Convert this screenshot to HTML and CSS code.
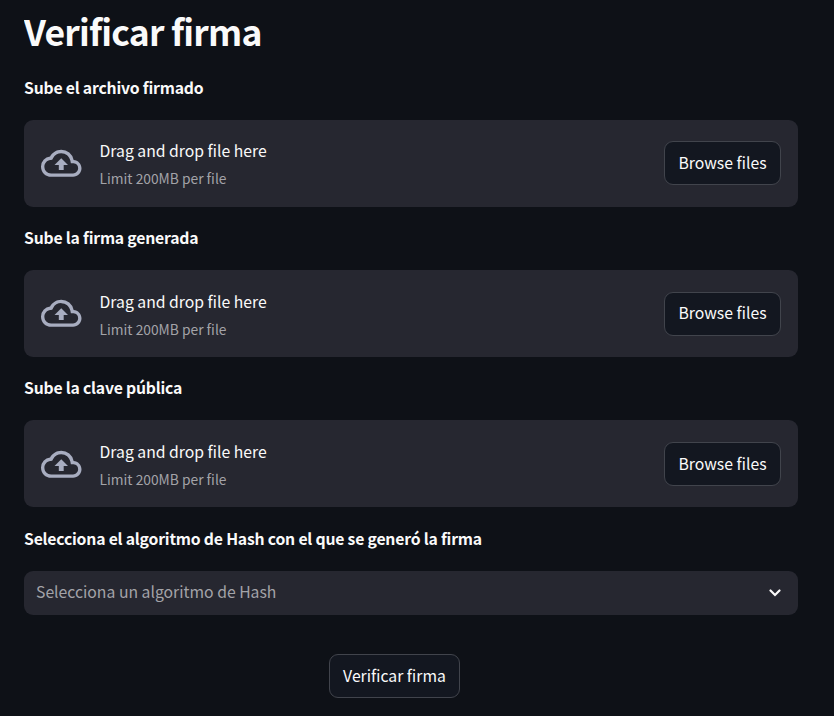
FILE: index.html
```html
<!DOCTYPE html>
<html lang="es">
<head>
<meta charset="utf-8">
<title>Verificar firma</title>
<link rel="stylesheet" href="styles.css">
</head>
<body>
<main class="page">
  <h1 class="title">Verificar firma</h1>
  <section class="field">
    <h2 class="label">Sube el archivo firmado</h2>
    <div class="drop">
      <svg class="cloud" viewBox="0 0 24 24"><path d="M19.35 10.04A7.49 7.49 0 0 0 12 4C9.11 4 6.6 5.64 5.35 8.04A5.994 5.994 0 0 0 0 14c0 3.31 2.69 6 6 6h13c2.76 0 5-2.24 5-5 0-2.64-2.05-4.78-4.65-4.96zM19 18H6c-2.21 0-4-1.79-4-4 0-2.05 1.53-3.76 3.56-3.97l1.07-.11.5-.95A5.469 5.469 0 0 1 12 6c2.62 0 4.88 1.86 5.39 4.43l.3 1.5 1.53.11A2.98 2.98 0 0 1 22 15c0 1.65-1.35 3-3 3zM8 13h2.55v3h2.9v-3H16l-4-4z"/></svg>
      <div class="info"><span class="main">Drag and drop file here</span><small class="limit">Limit 200MB per file</small></div>
      <button class="button">Browse files</button>
    </div>
  </section>
  <section class="field">
    <h2 class="label">Sube la firma generada</h2>
    <div class="drop">
      <svg class="cloud" viewBox="0 0 24 24"><path d="M19.35 10.04A7.49 7.49 0 0 0 12 4C9.11 4 6.6 5.64 5.35 8.04A5.994 5.994 0 0 0 0 14c0 3.31 2.69 6 6 6h13c2.76 0 5-2.24 5-5 0-2.64-2.05-4.78-4.65-4.96zM19 18H6c-2.21 0-4-1.79-4-4 0-2.05 1.53-3.76 3.56-3.97l1.07-.11.5-.95A5.469 5.469 0 0 1 12 6c2.62 0 4.88 1.86 5.39 4.43l.3 1.5 1.53.11A2.98 2.98 0 0 1 22 15c0 1.65-1.35 3-3 3zM8 13h2.55v3h2.9v-3H16l-4-4z"/></svg>
      <div class="info"><span class="main">Drag and drop file here</span><small class="limit">Limit 200MB per file</small></div>
      <button class="button">Browse files</button>
    </div>
  </section>
  <section class="field">
    <h2 class="label">Sube la clave pública</h2>
    <div class="drop">
      <svg class="cloud" viewBox="0 0 24 24"><path d="M19.35 10.04A7.49 7.49 0 0 0 12 4C9.11 4 6.6 5.64 5.35 8.04A5.994 5.994 0 0 0 0 14c0 3.31 2.69 6 6 6h13c2.76 0 5-2.24 5-5 0-2.64-2.05-4.78-4.65-4.96zM19 18H6c-2.21 0-4-1.79-4-4 0-2.05 1.53-3.76 3.56-3.97l1.07-.11.5-.95A5.469 5.469 0 0 1 12 6c2.62 0 4.88 1.86 5.39 4.43l.3 1.5 1.53.11A2.98 2.98 0 0 1 22 15c0 1.65-1.35 3-3 3zM8 13h2.55v3h2.9v-3H16l-4-4z"/></svg>
      <div class="info"><span class="main">Drag and drop file here</span><small class="limit">Limit 200MB per file</small></div>
      <button class="button">Browse files</button>
    </div>
  </section>
  <section class="field">
    <h2 class="label">Selecciona el algoritmo de Hash con el que se generó la firma</h2>
    <div class="select"><span class="placeholder">Selecciona un algoritmo de Hash</span>
      <svg class="chevron" viewBox="0 0 12 8"><path d="M1.5 1.5 6 6l4.5-4.5"/></svg>
    </div>
  </section>
  <button class="button submit">Verificar firma</button>
</main>
</body>
</html>
```
FILE: styles.css
```css
* { box-sizing: border-box; }
body { margin: 0; background: #0e1117; color: #fafafa; font-family: "Noto Sans CJK SC", "Noto Sans", sans-serif; font-size: 15.76px; }
.page { width: 774px; height: 716px; margin-left: 24px; display: flex; flex-direction: column; overflow: hidden; }
.title { margin: 0; height: 65.75px; flex: none; line-height: 62px; font-size: 35.5px; font-weight: 700; letter-spacing: -0.8px; white-space: nowrap; }
.field { height: 150.25px; flex: none; }
.label { margin: 0; height: 54px; line-height: 44px; font-size: 15.76px; font-weight: 700; letter-spacing: -0.2px; white-space: nowrap; }
.drop { height: 87px; display: flex; align-items: center; padding: 0 17px; background: #262730; border-radius: 9px; }
.cloud { width: 40.5px; height: 40.5px; fill: #a8adc0; }
.info { flex: 1; margin-left: 18px; padding-top: 3px; display: flex; flex-direction: column; white-space: nowrap; }
.main { line-height: 29px; }
.limit { font-size: 13.8px; line-height: 27.4px; padding-bottom: 0.6px; color: #a3a3a8; }
.button { height: 44px; width: 117px; padding: 0 0 1.2px; color: #fafafa; background: #131720; border: 1px solid #41444c; border-radius: 9px; font: inherit; white-space: nowrap; }
.select { height: 44px; padding: 0 17px 0 12px; display: flex; align-items: center; justify-content: space-between; background: #262730; border-radius: 9px; color: #a3a3a8; white-space: nowrap; }
.placeholder { padding-bottom: 2px; }
.chevron { width: 12px; height: 8px; fill: none; stroke: #fafafa; stroke-width: 2.2; stroke-linecap: round; }
.submit { width: 131px; flex: none; margin: -12.75px 0 0 305px; }
```
